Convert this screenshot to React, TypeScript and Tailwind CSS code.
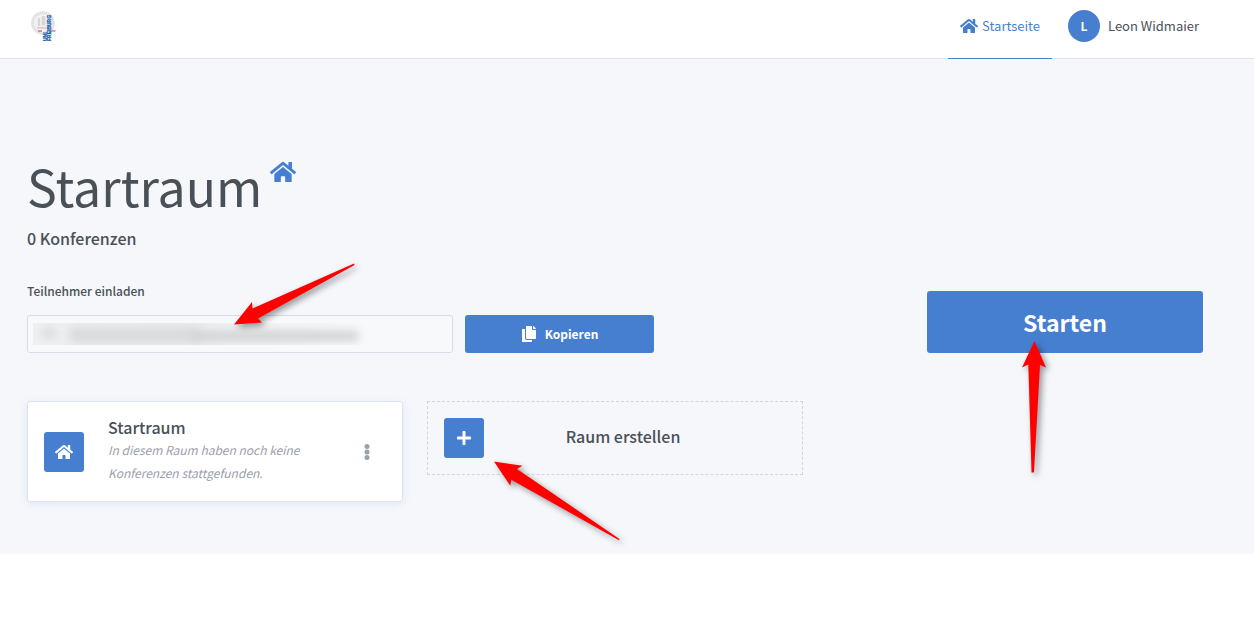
import { FaHome, FaCopy, FaPlus } from "react-icons/fa";

const rooms = [
  { name: "Startraum", info: "In diesem Raum haben noch keine Konferenzen stattgefunden." },
];

function Logo() {
  return (
    <svg viewBox="0 0 36 40" className="h-10 w-9" role="img" aria-label="Uni Freiburg">
      <circle cx="18" cy="18" r="12" fill="#ededed" />
      <circle cx="18" cy="18" r="10.5" fill="none" stroke="#dadada" strokeWidth="2" strokeDasharray="1 1" />
      <circle cx="18" cy="18" r="7.5" fill="none" stroke="#f8f8f8" />
      <path d="M13 13h2v8h-2zM17 11h3v9h-3zM12 22h9v2h-9z" fill="#d6d6d6" />
      <path d="M13 26h4M26.5 26h4" stroke="#d0365a" strokeWidth="1.2" />
      <g fill="#1f5fae" stroke="#1f5fae" strokeWidth="0.3" fontFamily="Liberation Sans" fontWeight="700">
        <text transform="translate(21.5 36) rotate(-90)" fontSize="5">UNI</text>
        <text transform="translate(26 36) rotate(-90)" fontSize="5">FREIBURG</text>
      </g>
    </svg>
  );
}

function Dots() {
  return (
    <svg viewBox="0 0 6 18" className="h-[18px] w-1.5" fill="currentColor" aria-hidden="true">
      <circle cx="3" cy="3.5" r="2.5" />
      <circle cx="3" cy="9" r="2.5" />
      <circle cx="3" cy="14.5" r="2.5" />
    </svg>
  );
}

function Arrow({ className, width, height, points }: { className: string; width: number; height: number; points: string }) {
  return (
    <svg
      width={width}
      height={height}
      className={`pointer-events-none absolute overflow-visible drop-shadow-[3px_3px_3px_rgba(0,0,0,0.4)] ${className}`}
      aria-hidden="true"
    >
      <polygon points={points} fill="#ff0000" />
    </svg>
  );
}

export default function App() {
  return (
    <div className="relative min-h-screen bg-white font-['Noto_Sans_CJK_JP','Noto_Sans',sans-serif] text-[13px] leading-6 text-[#495057]">
      <header className="border-b border-[#dfe3ed] bg-white pr-[51px] pl-[25px]">
        <div className="flex h-[58px] items-start justify-between">
          <a href="#" className="pt-[5px]">
            <Logo />
          </a>
          <nav className="flex gap-4">
            <a href="#" className="-mb-px flex h-[59px] items-start gap-1 border-b border-[#467fcf] px-3 pt-[14px] text-[#467fcf]">
              <FaHome className="mt-1 h-4 w-[18px]" />
              Startseite
            </a>
            <a href="#" className="flex items-start gap-2 pt-[10px]">
              <span className="flex h-8 w-8 items-center justify-center rounded-full bg-[#467fcf] text-[12px] font-bold text-white">
                L
              </span>
              <span className="w-[95px] pt-1 whitespace-nowrap">Leon Widmaier</span>
            </a>
          </nav>
        </div>
      </header>

      <main className="bg-[#f5f7fb] pt-[96px] pr-[51px] pb-[52px] pl-[27px]">
        <div className="flex items-start gap-2">
          <h1 className="text-[50px] leading-[60px]">Startraum</h1>
          <FaHome className="mt-1 h-[26px] w-[26px] text-[#467fcf]" />
        </div>
        <h2 className="mt-[11px] text-[16px] leading-6 font-medium">0 Konferenzen</h2>

        <div className="mt-[29px] flex items-end justify-between">
          <div className="w-[627px]">
            <label htmlFor="invite" className="block text-[12px] leading-6 font-medium">
              Teilnehmer einladen
            </label>
            <div className="mt-3 flex gap-3">
              <div className="relative flex-1">
                <input
                  id="invite"
                  readOnly
                  className="block h-[38px] w-full rounded-[3px] border border-[#d8dde8] bg-[#f8f9fa] px-3 outline-none"
                />
                {/* blurred room link */}
                <div className="pointer-events-none absolute top-2 left-1.5 h-[22px] w-[350px] overflow-hidden" aria-hidden="true">
                  <div className="h-full w-[340px] bg-linear-to-r from-[#f0f1f2] via-[#eeeff0] to-transparent" />
                  <div className="absolute top-1 left-2 h-3 w-4 bg-[#dcdee4] blur-[5px]" />
                  <div className="absolute top-1 left-9 h-4 w-[130px] bg-[#d9dadb] blur-[5px]" />
                  <div className="absolute top-2 left-[160px] h-2.5 w-[165px] bg-[#d0d1d3] blur-[4px]" />
                </div>
              </div>
              <button className="flex h-[38px] w-[189px] items-center justify-center gap-2 rounded-[3px] bg-[#467fcf] text-[12px] font-bold text-white">
                <FaCopy className="h-4 w-4" />
                Kopieren
              </button>
            </div>
          </div>
          <button className="h-[62px] w-[276px] rounded-[3px] bg-[#467fcf] text-[23px] font-bold text-white">
            Starten
          </button>
        </div>

        <div className="mt-12 grid grid-cols-[repeat(3,376px)] items-start gap-6">
          {rooms.map((room) => (
            <article
              key={room.name}
              className="flex h-[101px] items-center rounded-[3px] border border-[#dfe3ed] bg-white px-4 shadow-[0_2px_8px_rgba(70,127,207,0.12)]"
            >
              <span className="flex h-10 w-10 shrink-0 items-center justify-center rounded-[3px] bg-[#467fcf] text-white">
                <FaHome className="h-[18px] w-[18px]" />
              </span>
              <div className="ml-6 w-[220px] pb-1">
                <h3 className="text-[16px] leading-[22px] font-medium">{room.name}</h3>
                <p className="text-[12px] leading-[23px] text-[#9aa0ac] italic">{room.info}</p>
              </div>
              <button aria-label="Optionen" className="ml-auto px-4 py-3 text-[#9aa0ac]">
                <Dots />
              </button>
            </article>
          ))}
          <button className="flex h-[74px] items-center border border-dashed border-[#d3d5da] px-4">
            <span className="flex h-10 w-10 items-center justify-center rounded-[3px] bg-[#467fcf] text-white">
              <FaPlus className="h-4 w-4" />
            </span>
            <span className="flex-1 pr-6 pb-1 text-center text-[16px] font-medium">Raum erstellen</span>
          </button>
        </div>
      </main>

      <Arrow className="top-[263px] left-[234px]" width={120} height={62} points="0,61.5 18,39 18.5,45.5 120,0.5 120.5,2 24,55.5 28,59.5" />
      <Arrow className="top-[341px] left-[1022px]" width={24} height={132} points="12.5,0 24,26.5 18,24 12,131.5 9.5,131.5 6.3,23.5 0,26.5" />
      <Arrow className="top-[461px] left-[494px]" width={126} height={80} points="0,0.5 28.5,4.7 23,8 125.5,78 125,79.2 17.3,18.7 16.3,24.7" />
    </div>
  );
}
